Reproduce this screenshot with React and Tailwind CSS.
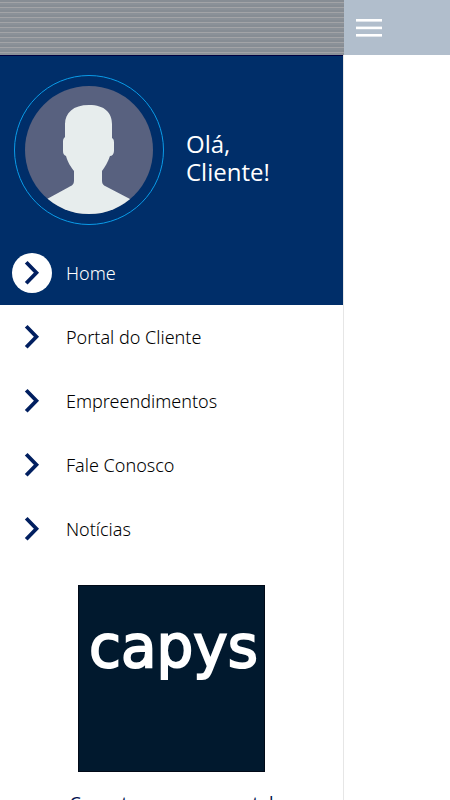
const menuItems = [
  { label: 'Home', href: '#home', active: true },
  { label: 'Portal do Cliente', href: '#portal' },
  { label: 'Empreendimentos', href: '#empreendimentos' },
  { label: 'Fale Conosco', href: '#contato' },
  { label: 'Notícias', href: '#noticias' },
];

function Chevron() {
  return (
    <svg width="16" height="26" viewBox="0 0 16 26" fill="none" aria-hidden="true">
      <path d="M2.2 2.2 12.4 12.7 2.2 23.2" stroke="#011f60" strokeWidth="3.8" />
    </svg>
  );
}

function MenuIcon() {
  return (
    <svg width="26" height="20" viewBox="0 0 26 20" fill="currentColor" aria-hidden="true">
      <rect width="26" height="2.6" y="1" />
      <rect width="26" height="2.6" y="8.6" />
      <rect width="26" height="2.6" y="16" />
    </svg>
  );
}

function Avatar() {
  return (
    <div className="w-[150px] h-[150px] shrink-0 rounded-full border border-[#0a9be8] flex items-center justify-center">
      <svg width="128" height="128" viewBox="0 0 128 128" role="img" aria-label="Foto do cliente">
        <clipPath id="avatar">
          <circle cx="64" cy="64" r="64" />
        </clipPath>
        <g clipPath="url(#avatar)">
          <rect width="128" height="128" fill="#58617f" />
          <path
            d="M64 19C80 19 87 27 87 38V52C89 53 89 55 89 58V65C89 68 87 70 85 70C83 76 80 81 77 85V94C77 98 78 99 82 101L105 113V128H22V113L44 101C48 99 49 98 49 94V85C46 81 43 77 41 70C39 69 38 68 38 65V56C38 54 38 53 40 51V38C40 27 48 19 64 19Z"
            fill="#e7eded"
          />
        </g>
      </svg>
    </div>
  );
}

function MenuItem({ label, href, active }) {
  return (
    <li>
      <a
        href={href}
        className={`flex items-center h-16 pl-3 gap-[14px] font-['Noto_Sans',sans-serif] text-lg font-light ${active ? 'text-white' : 'text-black'}`}
      >
        <span className={`flex items-center justify-center w-10 h-10 rounded-full ${active ? 'bg-white' : ''}`}>
          <Chevron />
        </span>
        {label}
      </a>
    </li>
  );
}

function CapysLogo() {
  return (
    <div className="mx-auto mt-6 w-[187px] h-[187px] bg-[#01192e] border border-[#010a18] pl-1 text-white text-center">
      <p className="mt-[26px] font-['DejaVu_Sans'] text-[58px] leading-[70px] [-webkit-text-stroke:2px_white]">capys</p>
    </div>
  );
}

export default function App() {
  return (
    <div className="flex h-screen overflow-hidden bg-white font-['Open_Sans',sans-serif]">
      <aside className="w-[344px] shrink-0 border-r border-[#e6e6e6]">
        <div className="h-[55px] -mr-px bg-[repeating-linear-gradient(to_bottom,#878d94_0px,#878d94_2px,#a3a4a7_2px,#a3a4a7_3px,#8b9198_3px,#8b9198_5px)]" />
        <div className="h-[186px] bg-[#002e69] border-t border-[#00003f] flex items-start gap-[22px] pl-[14px] pt-[19px]">
          <Avatar />
          <h1 className="mt-[55px] text-white text-2xl leading-7">
            Olá,
            <br />
            Cliente!
          </h1>
        </div>
        <nav>
          <ul className="bg-[#002e69]">
            <MenuItem {...menuItems[0]} />
          </ul>
          <ul>
            {menuItems.slice(1).map((item) => (
              <MenuItem key={item.label} {...item} />
            ))}
          </ul>
        </nav>
        <CapysLogo />
        <p className="mt-[17px] text-lg text-center text-[#01104e]">Conecte-se com o portal</p>
      </aside>
      <main className="flex-1">
        <header className="h-[55px] bg-[#b1becc] flex items-center pl-3">
          <button type="button" aria-label="Abrir menu" className="text-white">
            <MenuIcon />
          </button>
        </header>
      </main>
    </div>
  );
}
